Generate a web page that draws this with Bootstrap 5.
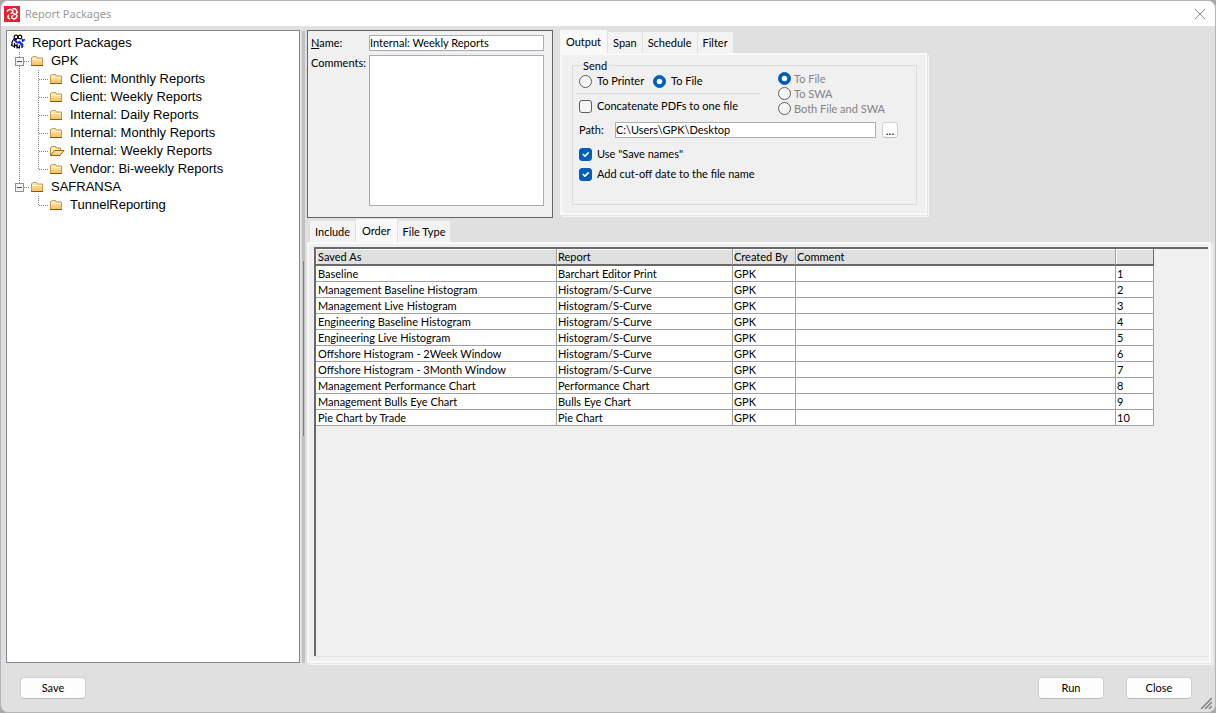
<!DOCTYPE html>
<html lang="en">
<head>
<meta charset="utf-8">
<meta name="viewport" content="width=device-width, initial-scale=1">
<title>Report Packages</title>
<link href="https://cdn.jsdelivr.net/npm/bootstrap@5.3.0/dist/css/bootstrap.min.css" rel="stylesheet">
<style>
  body { font: 11px/16px Lato, "Liberation Sans", sans-serif; color: #000; background: #a8a8a8; }
  .win { background: #e0e0e0; border: 1px solid #b4b4b4; border-radius: 8px; overflow: hidden; }
  .win-title { height: 25px; background: #fff; color: #999; padding: 0 9px 0 3px; font: 12px/24px "Noto Sans", sans-serif; }
  .win-title span { margin-left: 5px; font-size: 11px; }
  .win-title button { border: 0; background: none; padding: 0; line-height: 0; }
  .win-body { padding: 4px 3px 0 5px; min-height: 0; }
  .tree { width: 294px; background: #fff; border: 1px solid #828790; padding: 3px; font: 13px/18px "Liberation Sans", Arial, sans-serif; }
  .tree li > div { height: 18px; }
  .tree svg { flex: none; }
  .splitter { width: 3px; background: #c0c0c0; margin: 1px 2px 0; padding-top: 230px; }
  .splitter-grip { width: 1px; height: 175px; background: #808080; margin-left: 1px; }
  .details { width: 246px; height: 188px; background: #f0f0f0; border: 1px solid #646464; padding: 4px 8px 11px 3px; }
  .details label { width: 58px; flex: none; line-height: 16px; }
  .field { background: #fff; border: 1px solid #abadb3; border-radius: 0; padding: 0; font: inherit; color: #000; resize: none; min-width: 0; }
  .field:focus { outline: 1px solid #005fb8; }
  .field-line { height: 16px; }
  .nav-tabs.win-tabs { border: 0; gap: 1px; }
  .win-tabs .nav-link { background: #f3f3f3; border: 0; border-radius: 0; margin: 0; color: #000; padding: 0 5px; height: 21px; line-height: 21px; }
  .win-tabs .nav-link.active { background: #f9f9f9; height: 23px; line-height: 20px; color: #000; padding: 0 6px; }
  .lower-tabs { margin: 1px 0 0 3px; }
  .pane { background: #f0f0f0; border: 2px solid #f9f9f9; box-shadow: 1px 1px 0 #e6e6e6, 2px 2px 0 #f4f4f4; }
  .output-col { width: 367px; margin-left: 7px; }
  .output-pane { height: 162px; padding: 5px 8px 8px 10px; }
  .group { border: 1px solid #dcdcdc; padding: 0 6px; height: 145px; }
  .group legend { float: none; width: auto; margin: 0 0 0 3px; padding: 0 2px 0 1px; font: inherit; line-height: 11px; }
  .form-check.opt { min-height: 0; margin: 0; padding: 0; display: flex; align-items: center; gap: 5px; }
  .opt .form-check-input { width: 13px; height: 13px; margin: 0; float: none; flex: none; border: 1px solid #5f5f5f; background-color: #f5f5f5; }
  .opt .form-check-input[type=checkbox] { border-radius: 3px; }
  .opt .form-check-input:checked { background-color: #005fb8; border-color: #005fb8; }
  .opt .form-check-input:disabled, .opt .form-check-input:disabled ~ .form-check-label { opacity: 1; }
  .opt .form-check-input:disabled ~ .form-check-label { color: #838383; }
  .opt-row { height: 20px; }
  .send-left { width: 181px; }
  .first-opt { width: 74px; }
  .send-line { margin: 2px 0 2px -3px; border-top: 1px solid #dcdcdc; opacity: 1; color: inherit; }
  .targets { margin-left: 18px; }
  .targets .opt { height: 15px; gap: 3px; }
  .path-row { margin: 6px 0; }
  .path-row label { width: 36px; }
  .path-row .field { width: 261px; margin-right: 6px; }
  .btn.btn-win { background: #fdfdfd; border: 1px solid #d0d0d0; border-bottom-color: #bababa; border-radius: 4px; color: #000; font-size: 11px; line-height: 18px; padding: 1px 0; width: 66px; height: 22px; }
  .btn.btn-browse { width: 16px; height: 16px; padding: 0; line-height: 13px; font-size: 12px; }
  .table-pane { padding: 3px 1px 5px 5px; margin-right: 1px; }
  .table-frame { border-style: solid; border-width: 2px 0 0 2px; border-color: #696969; box-shadow: 0 1px 0 #e3e3e3; background: #f0f0f0; }
  .grid-table { width: 838px; table-layout: fixed; border-collapse: separate; border-spacing: 0; }
  .grid-table th, .grid-table td { height: 16px; padding: 0 1px; line-height: 15px; font-weight: 400; white-space: nowrap; overflow: hidden; border: 0 solid #a0a0a0; border-width: 0 1px 1px 0; background: #fff; }
  .grid-table th { height: 17px; background: #e0e0e0; border-bottom: 2px solid #696969; box-shadow: inset 1px 1px 0 #f8f8f8; }
  .grid-table th:first-child, .grid-table td:first-child { padding-left: 2px; }
  .grid-table th:last-child { border-right-color: #696969; }
  .win-foot { height: 49px; padding: 14px 23px 0 19px; gap: 22px; }
  .grip { position: absolute; right: 3px; bottom: 3px; }
</style>
</head>
<body>
<svg width="0" height="0" class="position-absolute" aria-hidden="true">
  <defs>
    <linearGradient id="gold" x1="0" y1="0" x2="0" y2="1"><stop offset="0" stop-color="#fdeeb4"/><stop offset="1" stop-color="#f5c060"/></linearGradient>
    <symbol id="folder" viewBox="0 0 22 18"><path d="M2.500 13.500V5.500L4.500 4.500H7.500L8.500 6H13.500V13.500Z" fill="url(#gold)" stroke="#c8964e"/><path d="M3 7.500H13" stroke="#fff6d0"/><path d="M2 13.500H14" stroke="#94560e"/></symbol>
    <symbol id="folder-open" viewBox="0 0 22 18"><path d="M2.500 13.500V5.500L4.500 4.500H7.500L8.500 6H12.500V9" fill="#fdeeb4" stroke="#b8823a"/><path d="M2.500 13.500L6.500 8.500H16L12 13.500Z" fill="url(#gold)" stroke="#a0620f"/></symbol>
    <symbol id="line" viewBox="0 0 19 18"><path d="M9.500 0V18" stroke="#808080" stroke-dasharray="1 1"/></symbol>
    <symbol id="tee" viewBox="0 0 19 18"><path d="M9.500 0V18M10 9.500H19" stroke="#808080" stroke-dasharray="1 1"/></symbol>
    <symbol id="elbow" viewBox="0 0 19 18"><path d="M9.500 0V10M10 9.500H19" stroke="#808080" stroke-dasharray="1 1"/></symbol>
    <symbol id="node" viewBox="0 0 19 18"><path d="M9.500 0V5M14 9.500H19" stroke="#808080" stroke-dasharray="1 1"/><rect x="5.500" y="5.500" width="8" height="8" fill="#f4f4f4" stroke="#919191"/><path d="M7 9.500H12" stroke="#3c50a8"/></symbol>
    <symbol id="node-tail" viewBox="0 0 19 18"><path d="M9.500 14V18" stroke="#808080" stroke-dasharray="1 1"/></symbol>
  </defs>
</svg>

<div class="win vh-100 d-flex flex-column position-relative">
  <header class="win-title d-flex align-items-center">
    <svg width="16" height="16" viewBox="0 0 16 16" aria-hidden="true"><rect width="16" height="16" fill="#e8212e"/><g fill="none" stroke="#fff" stroke-width="1.600"><path d="M3 5.500C4.500 3 7 3 8.500 4.500C9.500 6 8.500 7.500 6.500 7.200"/><path d="M8.500 3C12 2 14 5 12.500 7.500C11.500 9 10 8.500 9.500 7"/><path d="M13 9C13.500 11.500 11 13.500 8.500 12.500C7 11.500 7.500 9.500 9.500 9.500"/><path d="M6 13C3.500 12.500 3.500 10 5 8.800"/></g></svg>
    <span class="me-auto">Report Packages</span>
    <button type="button" aria-label="Close window"><svg width="12" height="12" viewBox="0 0 12 12"><path d="M1 1L11 11M11 1L1 11" stroke="#8c8c8c" fill="none"/></svg></button>
  </header>

  <main class="win-body d-flex flex-grow-1">
    <nav class="tree flex-shrink-0" aria-label="Report packages">
      <ul class="list-unstyled m-0">
        <li><div class="d-flex">
          <svg width="22" height="18" viewBox="0 0 22 18" aria-hidden="true"><g fill="none" stroke="#000" stroke-width="1.200"><circle cx="6" cy="3" r="1.800"/><circle cx="10" cy="3" r="1.800"/><path d="M2 8L4 5L7 6M2 8V11M4.500 9V14M7 10V14.500M9.500 11V14.500M12 12V14M1 11L5 13M5 11L9 14M12 5L13 8"/></g><path d="M4 5.500L7 8.500L10 8.500L13 11M12 7L15 5.500M9 7L13 13" fill="none" stroke="#1428e6" stroke-width="1.800"/></svg>
          <span>Report Packages</span></div>
          <ul class="list-unstyled m-0">
            <li><div class="d-flex"><svg width="19" height="18"><use href="#node"/><use href="#node-tail"/></svg><svg width="22" height="18"><use href="#folder"/></svg><span>GPK</span></div>
              <ul class="list-unstyled m-0">
                <li><div class="d-flex"><svg width="19" height="18"><use href="#line"/></svg><svg width="19" height="18"><use href="#tee"/></svg><svg width="22" height="18"><use href="#folder"/></svg><span>Client: Monthly Reports</span></div></li>
                <li><div class="d-flex"><svg width="19" height="18"><use href="#line"/></svg><svg width="19" height="18"><use href="#tee"/></svg><svg width="22" height="18"><use href="#folder"/></svg><span>Client: Weekly Reports</span></div></li>
                <li><div class="d-flex"><svg width="19" height="18"><use href="#line"/></svg><svg width="19" height="18"><use href="#tee"/></svg><svg width="22" height="18"><use href="#folder"/></svg><span>Internal: Daily Reports</span></div></li>
                <li><div class="d-flex"><svg width="19" height="18"><use href="#line"/></svg><svg width="19" height="18"><use href="#tee"/></svg><svg width="22" height="18"><use href="#folder"/></svg><span>Internal: Monthly Reports</span></div></li>
                <li><div class="d-flex"><svg width="19" height="18"><use href="#line"/></svg><svg width="19" height="18"><use href="#tee"/></svg><svg width="22" height="18"><use href="#folder-open"/></svg><span>Internal: Weekly Reports</span></div></li>
                <li><div class="d-flex"><svg width="19" height="18"><use href="#line"/></svg><svg width="19" height="18"><use href="#elbow"/></svg><svg width="22" height="18"><use href="#folder"/></svg><span>Vendor: Bi-weekly Reports</span></div></li>
              </ul>
            </li>
            <li><div class="d-flex"><svg width="19" height="18"><use href="#node"/></svg><svg width="22" height="18"><use href="#folder"/></svg><span>SAFRANSA</span></div>
              <ul class="list-unstyled m-0">
                <li><div class="d-flex"><svg width="19" height="18"></svg><svg width="19" height="18"><use href="#elbow"/></svg><svg width="22" height="18"><use href="#folder"/></svg><span>TunnelReporting</span></div></li>
              </ul>
            </li>
          </ul>
        </li>
      </ul>
    </nav>
    <div class="splitter flex-shrink-0"><div class="splitter-grip"></div></div>

    <div class="d-flex flex-column flex-grow-1">
      <div class="d-flex">
        <section class="details d-flex flex-column gap-1 flex-shrink-0">
          <div class="d-flex"><label for="pkgName"><u>N</u>ame:</label><input id="pkgName" class="field field-line flex-grow-1" type="text" value="Internal: Weekly Reports"></div>
          <div class="d-flex flex-grow-1"><label for="pkgComments">Comments:</label><textarea id="pkgComments" class="field flex-grow-1"></textarea></div>
        </section>

        <section class="output-col">
          <ul class="nav nav-tabs win-tabs align-items-end" role="tablist">
            <li class="nav-item"><button class="nav-link active" type="button" role="tab">Output</button></li>
            <li class="nav-item"><button class="nav-link" type="button" role="tab">Span</button></li>
            <li class="nav-item"><button class="nav-link" type="button" role="tab">Schedule</button></li>
            <li class="nav-item"><button class="nav-link" type="button" role="tab">Filter</button></li>
          </ul>
          <div class="pane output-pane" role="tabpanel">
            <fieldset class="group">
              <legend>Send</legend>
              <div class="d-flex">
                <div class="send-left">
                  <div class="d-flex opt-row">
                    <div class="form-check opt first-opt"><input class="form-check-input" type="radio" name="dest" id="toPrinter"><label class="form-check-label" for="toPrinter">To Printer</label></div>
                    <div class="form-check opt"><input class="form-check-input" type="radio" name="dest" id="toFile" checked><label class="form-check-label" for="toFile">To File</label></div>
                  </div>
                  <hr class="send-line">
                  <div class="form-check opt opt-row"><input class="form-check-input" type="checkbox" id="concat"><label class="form-check-label text-nowrap" for="concat">Concatenate PDFs to one file</label></div>
                </div>
                <div class="targets">
                  <div class="form-check opt"><input class="form-check-input" type="radio" name="target" id="tFile" checked disabled><label class="form-check-label" for="tFile">To File</label></div>
                  <div class="form-check opt"><input class="form-check-input" type="radio" name="target" id="tSwa" disabled><label class="form-check-label" for="tSwa">To SWA</label></div>
                  <div class="form-check opt"><input class="form-check-input" type="radio" name="target" id="tBoth" disabled><label class="form-check-label" for="tBoth">Both File and SWA</label></div>
                </div>
              </div>
              <div class="d-flex path-row">
                <label for="path">Path:</label><input id="path" class="field field-line" type="text" value="C:\Users\GPK\Desktop"><button type="button" class="btn btn-win btn-browse" aria-label="Browse">...</button>
              </div>
              <div class="form-check opt opt-row"><input class="form-check-input" type="checkbox" id="saveNames" checked><label class="form-check-label" for="saveNames">Use "Save names"</label></div>
              <div class="form-check opt opt-row"><input class="form-check-input" type="checkbox" id="cutoff" checked><label class="form-check-label" for="cutoff">Add cut-off date to the file name</label></div>
            </fieldset>
          </div>
        </section>
      </div>

      <section class="d-flex flex-column flex-grow-1">
        <ul class="nav nav-tabs win-tabs lower-tabs align-items-end" role="tablist">
          <li class="nav-item"><button class="nav-link" type="button" role="tab">Include</button></li>
          <li class="nav-item"><button class="nav-link active" type="button" role="tab">Order</button></li>
          <li class="nav-item"><button class="nav-link" type="button" role="tab">File Type</button></li>
        </ul>
        <div class="pane table-pane d-flex flex-column flex-grow-1" role="tabpanel">
          <div class="table-frame flex-grow-1">
            <table class="grid-table">
              <colgroup><col style="width:241px"><col style="width:176px"><col style="width:63px"><col style="width:320px"><col style="width:38px"></colgroup>
              <thead><tr><th>Saved As</th><th>Report</th><th>Created By</th><th>Comment</th><th></th></tr></thead>
              <tbody>
                <tr><td>Baseline</td><td>Barchart Editor Print</td><td>GPK</td><td></td><td>1</td></tr>
                <tr><td>Management Baseline Histogram</td><td>Histogram/S-Curve</td><td>GPK</td><td></td><td>2</td></tr>
                <tr><td>Management Live Histogram</td><td>Histogram/S-Curve</td><td>GPK</td><td></td><td>3</td></tr>
                <tr><td>Engineering Baseline Histogram</td><td>Histogram/S-Curve</td><td>GPK</td><td></td><td>4</td></tr>
                <tr><td>Engineering Live Histogram</td><td>Histogram/S-Curve</td><td>GPK</td><td></td><td>5</td></tr>
                <tr><td>Offshore Histogram - 2Week Window</td><td>Histogram/S-Curve</td><td>GPK</td><td></td><td>6</td></tr>
                <tr><td>Offshore Histogram - 3Month Window</td><td>Histogram/S-Curve</td><td>GPK</td><td></td><td>7</td></tr>
                <tr><td>Management Performance Chart</td><td>Performance Chart</td><td>GPK</td><td></td><td>8</td></tr>
                <tr><td>Management Bulls Eye Chart</td><td>Bulls Eye Chart</td><td>GPK</td><td></td><td>9</td></tr>
                <tr><td>Pie Chart by Trade</td><td>Pie Chart</td><td>GPK</td><td></td><td>10</td></tr>
              </tbody>
            </table>
          </div>
        </div>
      </section>
    </div>
  </main>

  <footer class="win-foot d-flex flex-shrink-0">
    <button type="button" class="btn btn-win me-auto">Save</button>
    <button type="button" class="btn btn-win">Run</button>
    <button type="button" class="btn btn-win">Close</button>
  </footer>
  <svg class="grip" width="12" height="12" viewBox="0 0 12 12" aria-hidden="true"><path d="M1 12L12 1M5 12L12 5M9 12L12 9" stroke="#808080" stroke-width="1.500"/></svg>
</div>
<script src="https://cdn.jsdelivr.net/npm/bootstrap@5.3.0/dist/js/bootstrap.bundle.min.js"></script>
</body>
</html>
